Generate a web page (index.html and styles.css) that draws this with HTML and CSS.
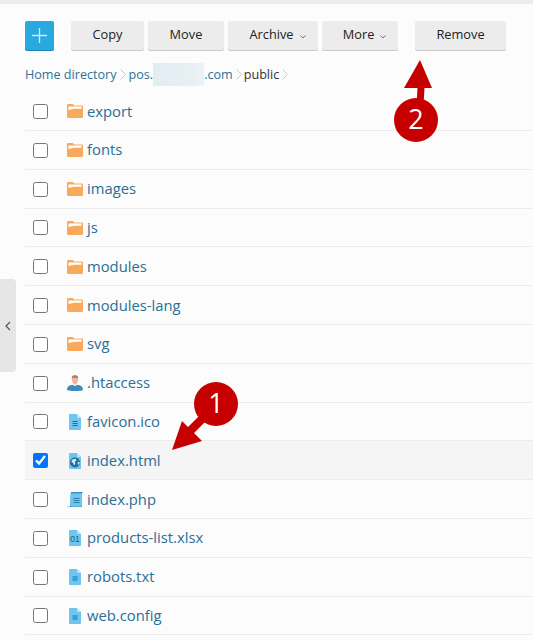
FILE: index.html
```html
<!DOCTYPE html>
<html lang="en">
<head>
<meta charset="utf-8">
<title>File manager</title>
<link rel="stylesheet" href="styles.css">
</head>
<body>
<svg width="0" height="0" class="defs">
  <defs>
    <symbol id="folder" viewBox="0 0 16 16">
      <path d="M0 2.200C0 1.500.5 1 1.200 1h4.200c.5 0 .8.2 1.100.6l.7 1h7.600c.7 0 1.200.5 1.200 1.200v10c0 .7-.5 1.200-1.200 1.200H1.200C.5 15 0 14.500 0 13.800z" fill="#f9a95c"/>
      <path d="M1.500 3.400h13v2.300l-7.300.1-5.700 1.300z" fill="#fff"/>
    </symbol>
    <symbol id="doc" viewBox="0 0 12 16">
      <path d="M1 0h7l4 4v11a1 1 0 0 1-1 1H1a1 1 0 0 1-1-1V1a1 1 0 0 1 1-1z" fill="#6fc5ee"/>
      <path d="M8 0l4 4H8z" fill="#b9e4f8"/>
      <path d="M3.500 7.500h5M3.500 9.500h5M3.500 11.500h5" stroke="#1e6c9c" stroke-width="1"/>
    </symbol>
    <symbol id="plain" viewBox="0 0 12 16">
      <path d="M1 0h7l4 4v11a1 1 0 0 1-1 1H1a1 1 0 0 1-1-1V1a1 1 0 0 1 1-1z" fill="#6fc5ee"/>
      <path d="M8 0l4 4H8z" fill="#b9e4f8"/>
      <rect x="3.500" y="7" width="5" height="5" fill="#3a9fd4"/>
    </symbol>
    <symbol id="bin" viewBox="0 0 12 16">
      <path d="M1 0h7l4 4v11a1 1 0 0 1-1 1H1a1 1 0 0 1-1-1V1a1 1 0 0 1 1-1z" fill="#6fc5ee"/>
      <path d="M8 0l4 4H8z" fill="#b9e4f8"/>
      <text x="6" y="12" text-anchor="middle" class="bintext">01</text>
    </symbol>
    <symbol id="web" viewBox="0 0 12 16">
      <path d="M1 0h7l4 4v11a1 1 0 0 1-1 1H1a1 1 0 0 1-1-1V1a1 1 0 0 1 1-1z" fill="#6fc5ee"/>
      <path d="M8 0l4 4H8z" fill="#b9e4f8"/>
      <circle cx="6" cy="9.500" r="5" fill="#1f6f9f"/>
      <path d="M3.500 6.500l3-.8 1 1.800-1.800 1.200.6 2.300-1.100 1.300-1.100-2.400-1.800-1.200zM8.500 9.500l2-.7v1.800l-1.200 1.300z" fill="#d6effb"/>
    </symbol>
    <symbol id="script" viewBox="0 0 16 16">
      <path d="M4 0h12l-1 1.500V15H1.500L0 16l1-1.500h2z" fill="#3f95c7"/>
      <rect x="3.500" y="1.500" width="11.500" height="13" fill="#6fc5ee"/>
      <path d="M6.500 6.500h6M6.500 8.500h6M6.500 10.500h6" stroke="#2b7cab" stroke-width="1"/>
    </symbol>
    <symbol id="user" viewBox="0 0 16 16">
      <path d="M0 14.500C0 11.500 3 10 5.500 9.800L8 11l2.500-1.200C13 10 16 11.500 16 14.500c0 1-3 1.500-8 1.500s-8-.5-8-1.500z" fill="#3e8db9"/>
      <path d="M4.800 3.500C4.800 1.500 6 .3 8 .3s3.200 1.200 3.200 3.200c0 2.500-1.200 6-3.200 6s-3.200-3.500-3.200-6z" fill="#eeb89a"/>
      <path d="M4.800 3.500C4.800 1.500 6 .3 8 .3s3.200 1.200 3.200 3.200C10 2.600 6 2.600 4.800 3.500z" fill="#a3806a"/>
    </symbol>
  </defs>
</svg>

<div class="topbar"></div>

<main class="content">
  <div class="toolbar">
    <button class="btn-add" type="button" aria-label="Add">
      <svg width="15" height="15" viewBox="0 0 15 15"><path d="M7.500 0v15M0 7.500h15" stroke="#cfeaf8" stroke-width="1.300"/></svg>
    </button>
    <button class="btn btn-copy" type="button">Copy</button>
    <button class="btn btn-move" type="button">Move</button>
    <button class="btn btn-archive" type="button">Archive<svg class="caret" width="6" height="4" viewBox="0 0 6 4"><path d="M.5.500L3 3 5.500.500" fill="none" stroke="#777" stroke-width="1"/></svg></button>
    <button class="btn btn-more" type="button">More<svg class="caret" width="6" height="4" viewBox="0 0 6 4"><path d="M.5.500L3 3 5.500.500" fill="none" stroke="#777" stroke-width="1"/></svg></button>
    <button class="btn btn-remove" type="button">Remove</button>
  </div>

  <nav class="crumbs">
    <a>Home directory</a>
    <svg class="sep" width="6" height="11" viewBox="0 0 6 11"><path d="M.5.500l5 5-5 5" fill="none" stroke="#c9c9c9"/></svg>
    <a class="domain">pos.<span class="blur"></span>.com</a>
    <svg class="sep" width="6" height="11" viewBox="0 0 6 11"><path d="M.5.500l5 5-5 5" fill="none" stroke="#c9c9c9"/></svg>
    <span class="current">public</span>
    <svg class="sep" width="6" height="11" viewBox="0 0 6 11"><path d="M.5.500l5 5-5 5" fill="none" stroke="#c9c9c9"/></svg>
  </nav>

  <ul class="files">
    <li class="row"><input type="checkbox"><svg class="ico"><use href="#folder"/></svg><a>export</a></li>
    <li class="row"><input type="checkbox"><svg class="ico"><use href="#folder"/></svg><a>fonts</a></li>
    <li class="row"><input type="checkbox"><svg class="ico"><use href="#folder"/></svg><a>images</a></li>
    <li class="row"><input type="checkbox"><svg class="ico"><use href="#folder"/></svg><a>js</a></li>
    <li class="row"><input type="checkbox"><svg class="ico"><use href="#folder"/></svg><a>modules</a></li>
    <li class="row"><input type="checkbox"><svg class="ico"><use href="#folder"/></svg><a>modules-lang</a></li>
    <li class="row"><input type="checkbox"><svg class="ico"><use href="#folder"/></svg><a>svg</a></li>
    <li class="row"><input type="checkbox"><svg class="ico"><use href="#user"/></svg><a>.htaccess</a></li>
    <li class="row"><input type="checkbox"><svg class="ico"><use href="#doc"/></svg><a>favicon.ico</a></li>
    <li class="row selected"><input type="checkbox" checked><svg class="ico"><use href="#web"/></svg><a>index.html</a></li>
    <li class="row"><input type="checkbox"><svg class="ico"><use href="#script"/></svg><a>index.php</a></li>
    <li class="row"><input type="checkbox"><svg class="ico"><use href="#bin"/></svg><a>products-list.xlsx</a></li>
    <li class="row"><input type="checkbox"><svg class="ico"><use href="#plain"/></svg><a>robots.txt</a></li>
    <li class="row"><input type="checkbox"><svg class="ico"><use href="#plain"/></svg><a>web.config</a></li>
  </ul>
</main>

<div class="side-tab">
  <svg width="6" height="10" viewBox="0 0 6 10"><path d="M5 1L1 5l4 4" fill="none" stroke="#555" stroke-width="1.200"/></svg>
</div>

<svg class="notes" width="533" height="640" viewBox="0 0 533 640">
  <path d="M420 60l12 28h-7.500l-.8 14h-7l.8-14H404z" fill="#c60000"/>
  <circle cx="416" cy="120" r="22" fill="#c60000"/>
  <text x="416" y="129" text-anchor="middle" class="num">2</text>
  <path d="M172 450l10-29 6 6 12-12 6 6-12 12 8 8z" fill="#c60000"/>
  <circle cx="216" cy="404" r="22" fill="#c60000"/>
  <text x="216" y="413" text-anchor="middle" class="num">1</text>
</svg>
</body>
</html>
```

FILE: styles.css
```css
* { box-sizing: border-box; }
html, body { margin: 0; padding: 0; }
body {
  width: 533px;
  height: 640px;
  overflow: hidden;
  position: relative;
  background: #fcfcfc;
  font-family: "Open Sans", "Noto Sans", sans-serif;
  color: #2a2a2a;
}
.defs { position: absolute; }
.topbar { height: 4px; background: #ececec; }
.content { padding: 17px 0 0 25px; }
.toolbar { display: flex; align-items: stretch; height: 29px; gap: 4px; }
.btn-add {
  width: 29px;
  margin-right: 13px;
  padding: 0;
  border: 0;
  border-radius: 2px;
  background: #28a9e0;
  box-shadow: 0 1px 0 #1c86b8;
  display: flex;
  align-items: center;
  justify-content: center;
}
.btn {
  border: 0;
  border-radius: 2px;
  padding: 0 0 3px;
  background: #ececec;
  box-shadow: 0 1px 0 #c9c9c9;
  font: 500 12.800px "Open Sans", sans-serif;
  color: #222;
}
.btn-copy { width: 73px; }
.btn-move { width: 76px; }
.btn-archive { width: 90px; padding-left: 9px; }
.btn-more { width: 76px; padding-left: 9px; }
.btn-remove { width: 91px; margin-left: 13px; }
.caret { margin-left: 6px; vertical-align: 0; }
.crumbs {
  display: flex;
  align-items: center;
  gap: 3px;
  height: 24px;
  margin-top: 12px;
  font-size: 12.600px;
  color: #2d7396;
}
.domain { display: flex; align-items: center; }
.blur {
  display: block;
  width: 51px;
  height: 23px;
  background: linear-gradient(90deg, #e2edf3, #e6eff4 60%, #edf2f5);
}
.current { color: #333; margin-left: -1px; }
.sep { flex: none; }
.files { list-style: none; margin: 6.110px 0 0; padding: 0; }
.row {
  display: flex;
  align-items: center;
  height: 38.820px;
  padding-left: 8px;
  border-bottom: 1px solid #ececec;
  font-size: 14.800px;
  color: #2a6f96;
}
.row a { margin-bottom: 1px; }
.row input { width: 15px; height: 15px; margin: 0.760px 19px 0 0; flex: none; }
.ico { width: 16px; height: 16px; margin: 0.760px 4px 0 0; flex: none; }
.selected { background: #f5f5f5; }
.bintext { font: 400 8.500px "Liberation Sans", sans-serif; fill: #125c8a; }
.side-tab {
  position: absolute;
  left: 0;
  top: 279px;
  width: 16px;
  height: 93px;
  background: #e6e6e6;
  border-radius: 0 4px 4px 0;
  display: flex;
  align-items: center;
  justify-content: center;
}
.notes { position: absolute; left: 0; top: 0; pointer-events: none; }
.num { font: 500 27px "Open Sans", sans-serif; fill: #fff; }
```
